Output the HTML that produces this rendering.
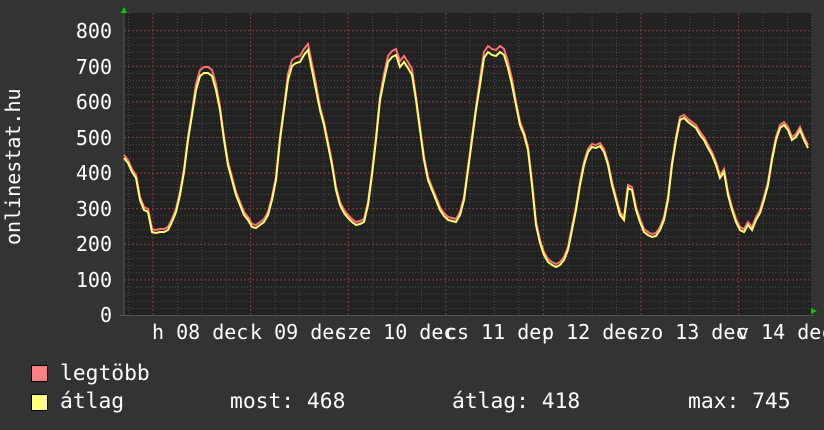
<!DOCTYPE html><html><head><meta charset="utf-8"><style>
body{margin:0;width:824px;height:430px;background:#333;overflow:hidden;position:relative;font-family:"DejaVu Sans Mono","Liberation Mono",monospace;color:#fff}
.t{position:absolute;font-size:20px;line-height:20px;white-space:pre}
.l{font-size:21.3px}
.y{position:absolute;font-size:20px;line-height:20px;right:712px;text-align:right}
.sq{position:absolute;left:31px;width:15px;height:15px;border:1px solid #000}
</style></head><body>
<svg width="824" height="430" style="position:absolute;left:0;top:0">
<rect x="124" y="13" width="688" height="303" fill="#222"/>
<g id="g"></g>
<line x1="124" y1="10" x2="124" y2="316" stroke="#555" stroke-width="1"/>
<line x1="120" y1="315.5" x2="814" y2="315.5" stroke="#555" stroke-width="1"/>
<polygon points="121,13 127,13 124,7" fill="#0c0"/>
<polygon points="811,308 811,314 817,311" fill="#0c0"/>
<polyline id="r" fill="none" stroke="#ff7070" stroke-width="2"/>
<polyline id="a" fill="none" stroke="#ffff70" stroke-width="2"/>
</svg>
<div class="y" style="top:21px">800</div>
<div class="y" style="top:57px">700</div>
<div class="y" style="top:92px">600</div>
<div class="y" style="top:128px">500</div>
<div class="y" style="top:163px">400</div>
<div class="y" style="top:199px">300</div>
<div class="y" style="top:234px">200</div>
<div class="y" style="top:270px">100</div>
<div class="y" style="top:305px">0</div>
<div class="t" style="left:-52px;top:170px;transform:rotate(-90deg);width:130px;text-align:center">onlinestat.hu</div>
<div class="t" style="left:152px;top:322px">h 08 dec</div>
<div class="t" style="left:250px;top:322px">k 09 dec</div>
<div class="t" style="left:335px;top:322px">sze 10 dec</div>
<div class="t" style="left:445px;top:322px">cs 11 dec</div>
<div class="t" style="left:542px;top:322px">p 12 dec</div>
<div class="t" style="left:627px;top:322px">szo 13 dec</div>
<div class="t" style="left:737px;top:322px">v 14 dec</div>
<div class="sq" style="top:365px;background:#ff8080"></div>
<div class="sq" style="top:394px;background:#ffff80"></div>
<div class="t l" style="left:60px;top:364px">legtöbb</div>
<div class="t l" style="left:60px;top:392px">átlag</div>
<div class="t l" style="left:230px;top:392px">most: 468</div>
<div class="t l" style="left:452px;top:392px">átlag: 418</div>
<div class="t l" style="left:688px;top:392px">max: 745</div>
<script>
var g=document.getElementById('g'),s='';
for(var i=0;i<=40;i++){var y=315.5-i*7.12;var maj=i%5==0;
s+='<line x1="124" x2="812" y1="'+y+'" y2="'+y+'" stroke="'+(maj?'#8a3c3c':'#4a4a4a')+'" stroke-dasharray="'+(maj?'2,2':'1,2')+'"/>';}
for(var x=128.6;x<812;x+=24.4){var d=[153,250,348,445,543,640,738].some(function(v){return Math.abs(v-x)<3});
s+='<line y1="13" y2="316" x1="'+x+'" x2="'+x+'" stroke="'+(d?'#8a3c3c':'#4a4a4a')+'" stroke-dasharray="'+(d?'2,2':'1,2')+'"/>';}
g.innerHTML=s;
var Y=[158,163,172,178,200,210,212,232,233,232,232,230,222,212,195,172,140,115,90,76,73,73,76,90,110,140,165,180,195,205,215,220,227,228,225,222,215,200,180,140,110,80,66,63,62,55,50,70,90,110,125,145,165,190,205,213,218,222,225,224,222,205,175,140,100,80,62,57,55,67,62,68,75,100,130,160,180,190,200,210,216,220,221,222,215,200,170,140,110,85,58,52,55,56,52,55,68,85,105,125,135,150,185,225,243,255,262,265,267,265,260,250,230,210,185,165,152,147,148,146,152,165,185,200,215,220,188,190,210,222,232,235,237,236,230,220,200,165,140,120,118,122,125,128,135,140,148,155,165,178,172,195,210,222,230,232,225,230,220,213,200,185,160,140,128,125,130,140,137,130,140,148];
var a=[],r=[];for(var k=0;k<Y.length;k++){var x=124+k*4;a.push(x+','+Y[k]);r.push(x+','+(Y[k]-3-(Y[k]<100?3:0)));}
document.getElementById('a').setAttribute('points',a.join(' '));
document.getElementById('r').setAttribute('points',r.join(' '));
</script>
</body></html>
